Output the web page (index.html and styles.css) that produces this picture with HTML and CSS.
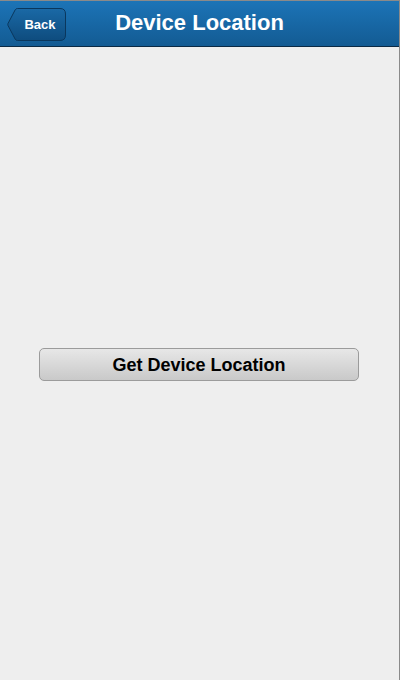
FILE: index.html
```html
<!DOCTYPE html>
<html>
<head>
<meta charset="utf-8">
<link rel="stylesheet" href="styles.css">
</head>
<body>
<div class="app">
  <header class="bar">
    <button class="back">
      <svg class="back-shape" width="59" height="33" viewBox="0 0 59 33">
        <defs>
          <linearGradient id="bg" x1="0" y1="0" x2="0" y2="1">
            <stop offset="0" stop-color="#1a69a6"/>
            <stop offset="1" stop-color="#0e4c7e"/>
          </linearGradient>
        </defs>
        <path d="M10.5 0.5 H53 Q58.5 0.5 58.5 6 V27 Q58.5 32.5 53 32.5 H10.5 Q9 32.5 8.2 31.2 L1 17.5 Q0.6 16.5 1 15.5 L8.2 1.8 Q9 0.5 10.5 0.5 Z" fill="url(#bg)" stroke="#0a375d" stroke-width="1"/>
      </svg>
      <span class="back-label">Back</span>
    </button>
    <h1 class="title">Device Location</h1>
  </header>
  <main class="content">
    <button class="action">Get Device Location</button>
  </main>
</div>
</body>
</html>
```

FILE: styles.css
```css
* { box-sizing: border-box; }
html, body { margin: 0; padding: 0; }
body {
  font-family: "Liberation Sans", Arial, sans-serif;
  background: #eeeeee;
  width: 400px;
  height: 680px;
  overflow: hidden;
}
.app {
  width: 400px;
  height: 680px;
  border-top: 1px solid #8a8a8a;
  border-right: 1px solid #8a8a8a;
  display: flex;
  flex-direction: column;
  background: #eeeeee;
}
.bar {
  position: relative;
  height: 46px;
  flex: none;
  background: linear-gradient(#1c74b7, #135b93);
  border-bottom: 1px solid #0a2a45;
  display: flex;
  align-items: center;
  justify-content: center;
}
.title {
  margin: 0;
  color: #fff;
  font-size: 22px;
  font-weight: bold;
  line-height: 26px;
  padding-bottom: 1px;
}
.back {
  position: absolute;
  left: 7px;
  top: 7px;
  width: 59px;
  height: 33px;
  padding: 0;
  margin: 0;
  border: 0;
  background: none;
  font-family: inherit;
}
.back-shape {
  position: absolute;
  left: 0;
  top: 0;
}
.back-label {
  position: relative;
  display: block;
  padding-left: 7px;
  color: #fff;
  font-size: 13px;
  font-weight: bold;
  line-height: 33px;
  text-align: center;
}
.content {
  flex: 1;
  display: flex;
  align-items: center;
  justify-content: center;
  padding-right: 1px;
}
.action {
  width: 320px;
  height: 33px;
  margin-top: 1px;
  border: 1px solid #9b9b9b;
  border-radius: 5px;
  background: linear-gradient(#e7e7e7, #c9c9c9);
  color: #000;
  font-family: "Liberation Sans", Arial, sans-serif;
  font-size: 18px;
  font-weight: bold;
  padding: 3px 0 0 0;
}
```
